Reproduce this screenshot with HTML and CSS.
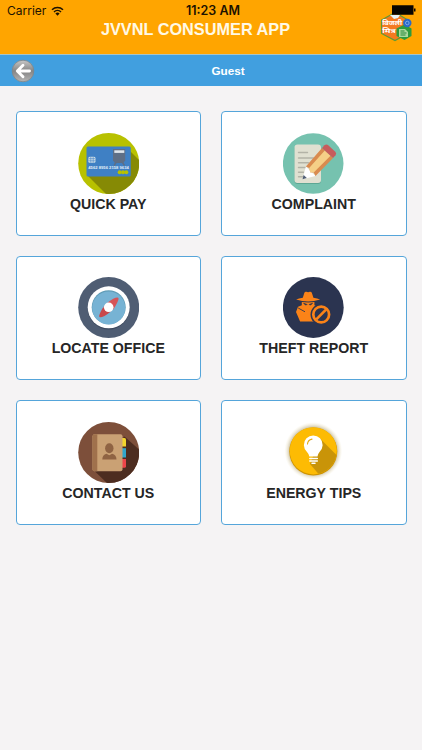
FILE: index.html
```html
<!DOCTYPE html>
<html lang="en">
<head>
    <meta charset="UTF-8">
    <meta name="viewport" content="width=device-width, initial-scale=1.0">
    <title>JVVNL Consumer App</title>
    <link rel="stylesheet" href="styles.css">
</head>
<body>
    <header>
        <div class="status-bar">
            <div class="carrier">
                <span>Carrier</span>
                <svg class="wifi" viewBox="0 0 13 10">
                    <path d="M1 3.8A8 8 0 0 1 12 3.8M3 6A5 5 0 0 1 10 6" fill="none" stroke="#1c1200" stroke-width="1.5"/>
                    <path d="M4.4 7.4a3.2 3.2 0 0 1 4.2 0L6.5 9.7z" fill="#1c1200"/>
                </svg>
            </div>
            <div class="time">11:23 AM</div>
        </div>
        <h1>JVVNL CONSUMER APP</h1>
        <svg class="logo" viewBox="20 4 38 38">
            <path d="M35 12.5 21.5 20v13.5L35 40.5l13-7V20z" fill="#f47a20" stroke="#5b9a38" stroke-width="1.2"/>
            <path d="m30 15 4 4 4-1 2-3z" fill="#e8f4f8"/>
            <path d="m44.5 24.5-8 4v7.5l8 4 7-4v-7.5z" fill="#2d9a3d"/>
            <path d="M39 29h6l3 3v5h-9z" fill="#a9d99c"/>
            <path d="M40.5 31h4M40.5 33h6M40.5 35h5" stroke="#25873a"/>
            <circle cx="47.3" cy="23" r="4.2" fill="#2868c8"/>
            <circle cx="47.3" cy="23" r="1.8" fill="none" stroke="#9bc4f2" stroke-width=".7"/>
            <text class="logo-text" x="22.2" y="25.2" textLength="20" lengthAdjust="spacingAndGlyphs">बिजली</text>
            <text class="logo-text" x="22.2" y="33.4" textLength="13.5" lengthAdjust="spacingAndGlyphs">मित्र</text>
            <path d="M32 5.2h21.5v9.6H32zM54 8.5h1.5v3H54z" fill="#080500"/>
        </svg>
    </header>

    <nav>
        <svg class="back" viewBox="0 0 24 24">
            <defs>
                <linearGradient id="back-fill" x1="0" y1="0" x2="0" y2="1">
                    <stop offset="0" stop-color="#c8c8c8"/>
                    <stop offset=".5" stop-color="#858585"/>
                    <stop offset="1" stop-color="#b5b5b5"/>
                </linearGradient>
            </defs>
            <circle cx="12" cy="12" r="10.8" fill="url(#back-fill)" stroke="#7f8588" stroke-width=".8"/>
            <path d="M18.5 12H6.5M12 6.3 6.3 12l5.7 5.7" fill="none" stroke="#fff" stroke-width="2.9" stroke-linecap="round" stroke-linejoin="round"/>
        </svg>
        <span>Guest</span>
    </nav>

    <main class="menu">
        <div class="card">
            <svg class="icon" viewBox="7.5 7.5 61 61">
                <clipPath id="disc"><circle cx="38.2" cy="38" r="30.5"/></clipPath>
                <circle cx="38.2" cy="38" r="30.5" fill="#b8c100"/>
                <path d="M17 50 38 71h34V38L59 25z" fill="#868a05" clip-path="url(#disc)"/>
                <rect x="16" y="21" width="44.3" height="30" rx="1.5" fill="#3f80c4"/>
                <path d="M42.5 23.5h12.2v11.5l-2 2.5h-8.2l-2-2.5z" fill="#5e6f86"/>
                <path d="m45.5 37-2 3M52 37l2 3" stroke="#5e6f86" stroke-width="1.5"/>
                <rect x="43.8" y="24.8" width="10" height="2.6" fill="#dfe6ec"/>
                <rect x="17.8" y="31.2" width="7.2" height="6" rx="1.5" fill="#d5e3e8"/>
                <path d="M17.8 33.2H25M17.8 35.3H25M20.3 31v6.2M22.7 31v6.2" stroke="#3f80c4" stroke-width=".6"/>
                <text class="card-number" x="17.8" y="43.1" textLength="40.5" lengthAdjust="spacingAndGlyphs">4562 8956 2158 9634</text>
                <g fill="#b8c100">
                    <circle cx="49.2" cy="46.8" r="2"/>
                    <circle cx="52.5" cy="46.8" r="2"/>
                    <circle cx="55.8" cy="46.8" r="2"/>
                </g>
            </svg>
            <span>QUICK PAY</span>
        </div>

        <div class="card">
            <svg class="icon" viewBox="7.5 7.5 61 61">
                <circle cx="37.7" cy="38" r="30.3" fill="#76c2af"/>
                <rect x="19" y="20" width="26.5" height="38.5" rx="3" fill="#5da794"/>
                <rect x="19" y="19" width="26.5" height="38.5" rx="3" fill="#e0e0d1"/>
                <path d="M23 27h9M23 32.5h15M23 37.3h10M23 42h7M23 46.7h5M23 51.3h4" stroke="#b3b3a7" stroke-width="1.4" stroke-linecap="round"/>
                <path d="M30.4 41 27 53.7l13-3.3z" fill="#fff"/>
                <path d="m28.1 49.5-1.1 4.2 4.3-1.1z" fill="#4f5d73"/>
                <path d="M30.4 41 46.5 22.5l11 10L40 50.4l-1.8-3.4-3.6-.3-.6-4z" fill="#d98b4f"/>
                <path d="M33.2 43 49.3 25l5.7 5.2L38.2 47l-3.6-.3-.6-4z" fill="#f5cf87"/>
                <path d="m46.5 22.5 2.5-2.7q2-1.6 4 .2l6.8 6.2q1.7 1.8.2 3.6l-2.5 2.7z" fill="#c75c5c"/>
            </svg>
            <span>COMPLAINT</span>
        </div>

        <div class="card">
            <svg class="icon" viewBox="7.5 7.5 61 61">
                <circle cx="38.2" cy="38" r="30.5" fill="#4f5d73"/>
                <circle cx="38.2" cy="39" r="21" fill="#3e4a5e"/>
                <circle cx="38.2" cy="37.8" r="21" fill="#fff"/>
                <circle cx="38.2" cy="37.8" r="17" fill="#609cb6"/>
                <circle cx="38.2" cy="38.4" r="16.5" fill="#77b3d4"/>
                <path d="M47.7 28.3q1 .5-.8 4.5-1.5 3.5-4.4 7.5l-6.3-6.3q3.5-3 6.5-4.7 4-2 5-1z" fill="#d65458"/>
                <path d="M29 47.5q-1-.6.7-4.3 1.5-3.7 4.6-7.5l6.2 6q-3.5 3.2-6.5 4.7-4 2-5 1.1z" fill="#c9484c"/>
                <circle cx="38.2" cy="37.8" r="4.8" fill="#fff"/>
            </svg>
            <span>LOCATE OFFICE</span>
        </div>

        <div class="card">
            <svg class="icon" viewBox="7.5 7.5 61 61">
                <circle cx="37.8" cy="38" r="30.4" fill="#2b3450"/>
                <g fill="#fb8318">
                    <path d="m27.3 28.3 1.5-4.8q.5-1.4 2-1.2l1.8.5 1.8-.5q1.5-.2 2 1.2l1.5 4.8q4 .4 6.7 1.8-6 2-12 2t-12-2q2.7-1.4 6.7-1.8z"/>
                    <path d="M26.3 32.6q6.3.8 12.6 0v3.2l5.6 2.2.5 3-6 8v3H24.6l-4.1-9.5 2-5.3 3.8-1.4z"/>
                </g>
                <path d="m28 33.6 3.8 1.4-2 .6zM37.2 33.6 33.4 35l2 .6z" fill="#2b3450" stroke="#2b3450" stroke-width=".5"/>
                <path d="m22.7 38.5 6.8 3.8" stroke="#2b3450" stroke-width=".9"/>
                <circle cx="45.7" cy="45" r="10.7" fill="#2b3450"/>
                <circle cx="45.7" cy="45" r="7.9" fill="none" stroke="#fb8318" stroke-width="2.7"/>
                <path d="m40.8 49.8 9.8-9.8" stroke="#fb8318" stroke-width="2.5"/>
            </svg>
            <span>THEFT REPORT</span>
        </div>

        <div class="card">
            <svg class="icon" viewBox="7.5 7.5 61 61">
                <circle cx="38.2" cy="38" r="30.5" fill="#7d4f3a"/>
                <path d="M23.5 56 40 72h32V38L54 22z" fill="#4d2d20" clip-path="url(#disc)"/>
                <path d="M50 23.5h4q1.5 0 1.5 1.5v7H50z" fill="#f2d52d"/>
                <path d="M50 33.7h5.5V43H50z" fill="#31a6cb"/>
                <path d="M50 44.5h5.5v7.3q0 1.5-1.5 1.5h-4z" fill="#ed4549"/>
                <rect x="22" y="19.8" width="30" height="37" rx="2" fill="#caa174"/>
                <path d="M24 19.8h2.8v37H24q-2 0-2-2v-33q0-2 2-2z" fill="#a0714c"/>
                <ellipse cx="38.8" cy="33.7" rx="4.2" ry="5" fill="#8f6343"/>
                <path d="M31.8 45q0-4.5 4.2-5.8l2.8 1.6 2.8-1.6q4.4 1.3 4.4 5.8z" fill="#8f6343"/>
            </svg>
            <span>CONTACT US</span>
        </div>

        <div class="card">
            <svg class="icon" viewBox="7.5 7.5 61 61">
                <defs>
                    <radialGradient id="glow">
                        <stop offset=".8" stop-color="#a8986a" stop-opacity=".65"/>
                        <stop offset="1" stop-color="#f0e4bc" stop-opacity="0"/>
                    </radialGradient>
                    <clipPath id="bulb-disc"><circle cx="37.8" cy="36.3" r="23.6"/></clipPath>
                </defs>
                <circle cx="37.8" cy="36.5" r="29" fill="url(#glow)"/>
                <circle cx="37.8" cy="37" r="24" fill="#cf9400"/>
                <circle cx="37.8" cy="36.3" r="23.6" fill="#fdbb03"/>
                <path d="m44.5 24 20 20v20H47L34.5 49.5z" fill="#c99408" clip-path="url(#bulb-disc)"/>
                <path d="M33.8 42q0-2.2-2.3-4.6A9.4 9.4 0 1 1 44 37.4q-2 2.4-2 4.6z" fill="#fff"/>
                <path d="M32 29.5q.3-4 4.5-4.9" fill="none" stroke="#e3aa18" stroke-width="1.1" stroke-linecap="round"/>
                <path d="M34.3 44h7.5M34.3 46.5h7.5M36.5 48.8h3" stroke="#fff" stroke-width="1.5" stroke-linecap="round"/>
            </svg>
            <span>ENERGY TIPS</span>
        </div>
    </main>
</body>
</html>
```
FILE: styles.css
```css
* {
    box-sizing: border-box;
}

body {
    margin: 0;
    min-height: 100vh;
    font-family: "Liberation Sans", Arial, sans-serif;
    background-color: #f5f3f4;
}

/* Top header with phone status line */
header {
    position: relative;
    height: 55px;
    background-color: #ffa500;
    border-bottom: 1px solid #a9c4c4;
}

.status-bar {
    display: grid;
    grid-template-columns: 1fr auto 1fr;
    align-items: center;
    height: 21px;
    padding: 0 7px;
    font-family: Inter, sans-serif;
    font-size: 12px;
    color: #1c1200;
}

.carrier {
    display: flex;
    align-items: center;
    gap: 5px;
}

.wifi {
    width: 13px;
    height: 10px;
}

.time {
    font-size: 12.5px;
    font-weight: 600;
    padding-left: 4px;
}

h1 {
    margin: 0;
    padding-right: 31px;
    text-align: center;
    font-size: 16.3px;
    line-height: 16px;
    color: #fff9e6;
}

.logo {
    position: absolute;
    top: 4px;
    left: 380px;
    width: 38px;
    height: 38px;
}

.logo-text {
    font-family: "Noto Sans", sans-serif;
    font-size: 5.5px;
    font-weight: bold;
    fill: #fff;
}

/* Blue bar with back button */
nav {
    display: grid;
    grid-template-columns: 24px 1fr;
    align-items: center;
    height: 31px;
    padding-left: 11px;
    background-color: #419fdf;
    color: #fff;
    font-size: 11.7px;
    font-weight: bold;
    text-align: center;
}

.back {
    width: 24px;
    height: 24px;
}

nav span {
    padding-right: 1px;
}

/* Menu cards */
.menu {
    display: grid;
    grid-template-columns: 1fr 1fr;
    grid-auto-rows: 124.6px;
    gap: 20px;
    padding: 25px 15.5px;
}

.card {
    display: flex;
    flex-direction: column;
    align-items: center;
    padding-top: 20.5px;
    background-color: #fff;
    border: 1.3px solid #55a5da;
    border-radius: 4px;
    color: #262626;
    font-size: 14.2px;
    font-weight: bold;
    line-height: 20px;
}

.icon {
    width: 61px;
    height: 61px;
}

.card-number {
    font-size: 4.3px;
    font-weight: bold;
    fill: #e6f0f8;
}
```
